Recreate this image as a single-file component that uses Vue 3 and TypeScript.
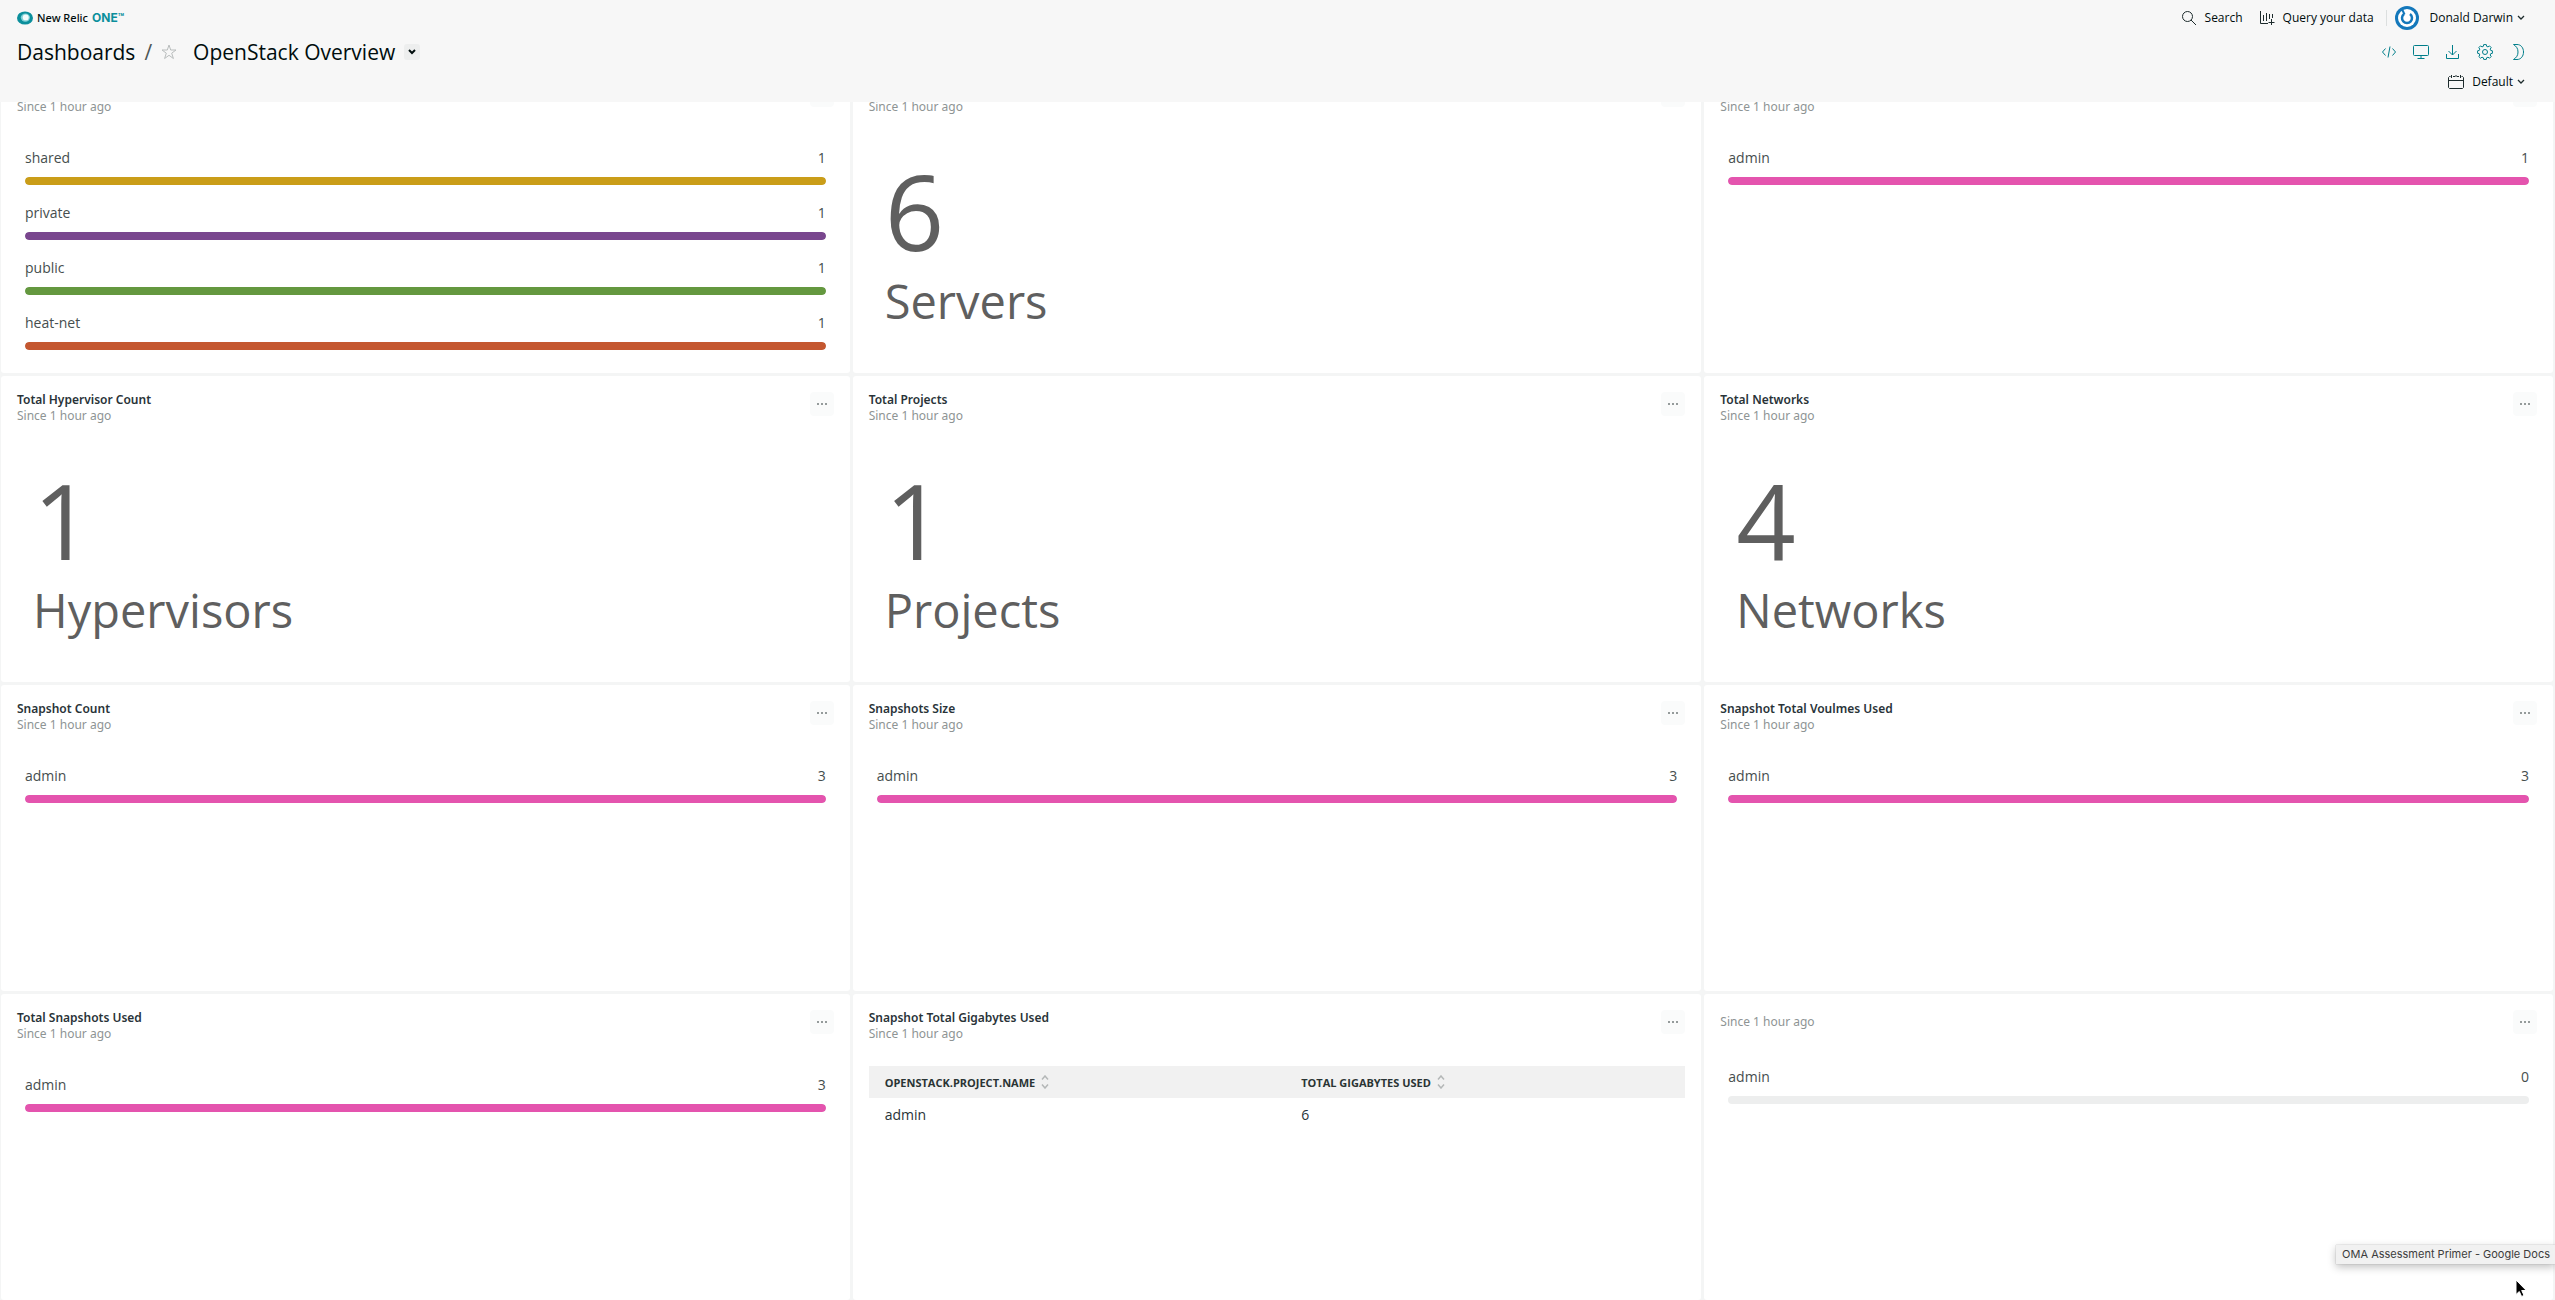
<script setup lang="ts">
import { onMounted, ref } from 'vue'

interface Bar {
  name: string
  value: number
  color: string
}

interface Widget {
  id: string
  title?: string
  bars?: Bar[]
  count?: number
  unit?: string
  table?: { project: string; used: number }[]
}

const pink = '#e454ae'

const widgets: Widget[] = [
  {
    id: 'network-names',
    title: '',
    bars: [
      { name: 'shared', value: 1, color: '#ca9d18' },
      { name: 'private', value: 1, color: '#79468e' },
      { name: 'public', value: 1, color: '#64983f' },
      { name: 'heat-net', value: 1, color: '#c45730' },
    ],
  },
  { id: 'servers', title: '', count: 6, unit: 'Servers' },
  { id: 'owners', title: '', bars: [{ name: 'admin', value: 1, color: pink }] },
  { id: 'hypervisors', title: 'Total Hypervisor Count', count: 1, unit: 'Hypervisors' },
  { id: 'projects', title: 'Total Projects', count: 1, unit: 'Projects' },
  { id: 'networks', title: 'Total Networks', count: 4, unit: 'Networks' },
  { id: 'snap-count', title: 'Snapshot Count', bars: [{ name: 'admin', value: 3, color: pink }] },
  { id: 'snap-size', title: 'Snapshots Size', bars: [{ name: 'admin', value: 3, color: pink }] },
  { id: 'snap-volumes', title: 'Snapshot Total Voulmes Used', bars: [{ name: 'admin', value: 3, color: pink }] },
  { id: 'snap-used', title: 'Total Snapshots Used', bars: [{ name: 'admin', value: 3, color: pink }] },
  { id: 'snap-gigabytes', title: 'Snapshot Total Gigabytes Used', table: [{ project: 'admin', used: 6 }] },
  { id: 'untitled', bars: [{ name: 'admin', value: 0, color: pink }] },
]

const board = ref<HTMLElement | null>(null)

// Bars are relative to the largest value in their own widget.
function share(bar: Bar, all: Bar[]): string {
  const max = Math.max(...all.map((b) => b.value))
  return max > 0 ? `${(bar.value / max) * 100}%` : '0%'
}

onMounted(() => {
  if (board.value) board.value.scrollTop = 35
})
</script>

<template>
  <div class="app">
    <header class="head">
      <div class="row row-top">
        <a class="brand" href="#">
          <svg width="16" height="14" viewBox="0 0 16 14" aria-hidden="true">
            <ellipse cx="8" cy="7" rx="8" ry="6.6" fill="#0b8f9c" />
            <ellipse cx="8.4" cy="6.6" rx="4.6" ry="4.2" fill="#7fd0d6" />
            <ellipse cx="8.7" cy="6.4" rx="3" ry="2.9" fill="#f2fbfb" />
          </svg>
          <span class="brand-name">New Relic</span>
          <span class="brand-one">ONE<span class="brand-tm">™</span></span>
        </a>
        <nav class="tools">
          <button class="tool" type="button">
            <svg width="16" height="16" viewBox="0 0 16 16" fill="none" stroke="#1d2b2c" aria-hidden="true">
              <circle cx="6.5" cy="6.5" r="5" />
              <path d="M10 10l5 5" />
            </svg>
            Search
          </button>
          <button class="tool query" type="button">
            <svg width="16" height="16" viewBox="0 0 16 16" fill="none" stroke="#1d2b2c" aria-hidden="true">
              <path d="M1.500 1v12.500H9M4.500 5v6M7.500 3v8M10.500 4v5M13.500 4v4M12.500 9v6M9.500 12.500h6" />
            </svg>
            Query your data
          </button>
          <span class="divider"></span>
          <button class="tool user" type="button">
            <svg width="24" height="24" viewBox="0 0 24 24" fill="none" aria-hidden="true">
              <circle cx="12" cy="12" r="12" fill="#1478bb" />
              <circle cx="12" cy="12" r="9" fill="#fff" />
              <path d="M9 8a5 5 0 1 0 6 0" stroke="#1478bb" stroke-width="2.500" />
              <path d="M7 3l2.500 5.500" stroke="#1478bb" stroke-width="2" />
            </svg>
            <span class="user-name">Donald Darwin</span>
            <svg class="chev" width="8" height="6" viewBox="0 0 8 6" fill="none" stroke="#1d2b2c" stroke-width="1.300" aria-hidden="true">
              <path d="M1 1l3 3 3-3" />
            </svg>
          </button>
        </nav>
      </div>

      <div class="row row-title">
        <div class="crumbs">
          <a href="#">Dashboards</a>
          <span class="slash">/</span>
          <button class="star" type="button" aria-label="Favorite">
            <svg width="16" height="16" viewBox="0 0 16 16" fill="none" stroke="#b9bdbd" aria-hidden="true">
              <path d="M8 1l1.700 5H15l-4.300 3.200 1.700 5.300L8 11.300l-4.400 3.200 1.700-5.300L1 6h5.300z" />
            </svg>
          </button>
          <h1>OpenStack Overview</h1>
          <button class="more" type="button" aria-label="Switch dashboard">
            <svg width="8" height="6" viewBox="0 0 8 6" fill="none" stroke="#000d0d" stroke-width="2" aria-hidden="true">
              <path d="M1 1l3 3 3-3" />
            </svg>
          </button>
        </div>
        <div class="actions">
          <button type="button" aria-label="Embed code">
            <svg width="16" height="16" viewBox="0 0 16 16" aria-hidden="true">
              <path d="M4.500 4.500L1.500 8l3 3.500M11.500 4.500l3 3.500-3 3.500M9 2.500l-2 11" />
            </svg>
          </button>
          <button type="button" aria-label="TV mode">
            <svg width="16" height="16" viewBox="0 0 16 16" aria-hidden="true">
              <rect x=".5" y="1.500" width="15" height="10" rx="1" />
              <path d="M8 11.500v3M4.500 14.500h7" />
            </svg>
          </button>
          <button type="button" aria-label="Download">
            <svg width="16" height="16" viewBox="0 0 16 16" aria-hidden="true">
              <path d="M7.500 1v10M3.500 7l4 4 4-4M1.500 10v4.500h12V10" />
            </svg>
          </button>
          <button type="button" aria-label="Settings">
            <svg width="16" height="16" viewBox="0 0 16 16" aria-hidden="true">
              <path d="M6.700 .6h2.600l.4 1.800 1.300.5 1.500-1 1.700 1.700-1 1.500.5 1.300 1.700.4v2.500l-1.700.4-.5 1.300 1 1.500-1.700 1.700-1.500-1-1.300.5-.4 1.700H6.700l-.4-1.700-1.300-.5-1.500 1-1.700-1.700 1-1.500-.5-1.300-1.700-.4V6.800l1.700-.4.5-1.300-1-1.500 1.700-1.700 1.500 1 1.300-.5z" />
              <circle cx="8" cy="8" r="2.500" />
            </svg>
          </button>
          <button type="button" aria-label="Dark mode">
            <svg width="16" height="16" viewBox="0 0 16 16" aria-hidden="true">
              <path d="M4.500 .5H8c4 0 6.500 3.400 6.500 7.500S12 15.500 8 15.500H4.500C7.500 13.500 9 11.500 9 8S7.500 2.500 4.500 .5z" />
            </svg>
          </button>
        </div>
      </div>

      <div class="row row-time">
        <button class="tool time" type="button">
          <svg width="16" height="16" viewBox="0 0 16 16" fill="none" stroke="#1d2b2c" aria-hidden="true">
            <path d="M2.500 2.500h-1l-1 1v10l1 1h13l1-1v-10l-1-1h-1M5 2.500h2M9 2.500h2M3.500 1v3M8 1v2M12.500 1v3M.5 6.500h15" />
          </svg>
          <span>Default</span>
          <svg class="chev" width="8" height="6" viewBox="0 0 8 6" fill="none" stroke="#1d2b2c" stroke-width="1.300" aria-hidden="true">
            <path d="M1 1l3 3 3-3" />
          </svg>
        </button>
      </div>
    </header>

    <main ref="board" class="board">
      <div class="grid">
        <section v-for="w in widgets" :key="w.id" class="card">
          <div class="card-head">
            <div class="card-text">
              <h2 v-if="w.title !== undefined">{{ w.title }}</h2>
              <p>Since 1 hour ago</p>
            </div>
            <button class="dots" type="button" aria-label="Widget menu">
              <svg width="10" height="2" viewBox="0 0 10 2" fill="#959b9b" aria-hidden="true">
                <path d="M0 0h2v2H0zM4 0h2v2H4zM8 0h2v2H8z" />
              </svg>
            </button>
          </div>

          <ul v-if="w.bars" class="bars">
            <li v-for="b in w.bars" :key="b.name">
              <div class="bar-label">
                <span>{{ b.name }}</span>
                <span>{{ b.value }}</span>
              </div>
              <div class="track">
                <div class="fill" :style="{ width: share(b, w.bars), background: b.color }"></div>
              </div>
            </li>
          </ul>

          <div v-if="w.unit" class="billboard">
            <div class="count">{{ w.count }}</div>
            <div class="unit">{{ w.unit }}</div>
          </div>

          <table v-if="w.table" class="table">
            <thead>
              <tr>
                <th v-for="h in ['OPENSTACK.PROJECT.NAME', 'TOTAL GIGABYTES USED']" :key="h" scope="col">
                  <span class="th">
                    {{ h }}
                    <svg width="8" height="14" viewBox="0 0 8 14" fill="none" stroke="#b4b7b7" stroke-width="1.500" aria-hidden="true">
                      <path d="M1 4.500l3-3.500 3 3.500M1 9.500L4 13l3-3.500" />
                    </svg>
                  </span>
                </th>
              </tr>
            </thead>
            <tbody>
              <tr v-for="r in w.table" :key="r.project">
                <td>{{ r.project }}</td>
                <td>{{ r.used }}</td>
              </tr>
            </tbody>
          </table>
        </section>
      </div>
    </main>

    <div class="tip" role="tooltip">OMA Assessment Primer - Google Docs</div>
    <svg class="pointer" width="12" height="18" viewBox="0 0 12 18" aria-hidden="true">
      <path d="M1 1v14.500l3.300-3 2.300 5 2.400-1.100-2.300-4.900h4.600z" fill="#000" stroke="#fff" />
    </svg>
  </div>
</template>

<style>
body {
  margin: 0;
  overflow: hidden;
}
</style>

<style scoped>
.app {
  position: relative;
  display: flex;
  flex-direction: column;
  height: 100vh;
  overflow: hidden;
  background: #f4f5f5;
  color: #000d0d;
  font-family: 'Open Sans', 'Noto Sans', sans-serif;
  font-size: 12px;
}

button {
  display: flex;
  align-items: center;
  justify-content: center;
  margin: 0;
  padding: 0;
  border: 0;
  background: none;
  color: inherit;
  font: inherit;
  cursor: pointer;
}

a {
  color: inherit;
  text-decoration: none;
}

h1,
h2,
p,
ul {
  margin: 0;
  padding: 0;
  list-style: none;
}

svg {
  display: block;
  flex: none;
}

.head {
  flex: none;
  padding: 0 30px 6px 17px;
  background: #f7f7f7;
}

.row {
  display: flex;
  align-items: center;
  justify-content: space-between;
}

.row-top {
  height: 36px;
}

.row-title {
  height: 32px;
}

.row-time {
  height: 28px;
  justify-content: flex-end;
}

.brand {
  display: flex;
  align-items: center;
  line-height: 16px;
}

.brand-name {
  margin: 0 4px;
  font-family: 'Noto Sans', sans-serif;
  font-size: 11px;
  font-weight: 500;
}

.brand-one {
  display: flex;
  color: #0b8f9c;
  font-family: 'Inter', sans-serif;
  font-size: 12px;
  font-weight: 700;
}

.brand-tm {
  font-size: 10px;
  line-height: 14px;
}

.tools {
  display: flex;
  align-items: center;
}

.tool {
  gap: 8px;
  line-height: 16px;
}

.query {
  margin-left: 16px;
}

.divider {
  width: 1px;
  height: 16px;
  margin: 0 8px 0 12px;
  background: #dcdfdf;
}

.user {
  gap: 0;
}

.user-name {
  margin-left: 11px;
}

.chev {
  margin-left: 4px;
}

.crumbs {
  display: flex;
  align-items: center;
  font-size: 21px;
  line-height: 28px;
}

.slash {
  margin: 0 9px;
  color: #4d5656;
}

h1 {
  margin: 0 9px 0 16px;
  font-size: 21px;
  font-weight: 400;
}

.more {
  width: 16px;
  height: 16px;
  border-radius: 3px;
  background: #edeeee;
}

.actions {
  display: flex;
  gap: 16px;
}

.actions svg {
  fill: none;
  stroke: #007e8a;
}

.time {
  gap: 0;
}

.time span {
  margin-left: 8px;
}

.board {
  flex: 1;
  min-height: 0;
  overflow-y: auto;
  scrollbar-width: none;
}

.grid {
  display: grid;
  grid-template-columns: repeat(3, minmax(0, 1fr));
  grid-auto-rows: 306px;
  gap: 3px;
  padding: 0 2px 0 1px;
}

.card {
  padding: 16px;
  border-radius: 3px;
  background: #fff;
}

.card-head {
  display: flex;
  align-items: flex-start;
  justify-content: space-between;
}

.card-text {
  display: flex;
  flex-direction: column;
  justify-content: center;
  min-height: 24px;
  font-family: 'Noto Sans', 'Open Sans', sans-serif;
  line-height: 16px;
}

h2 {
  min-height: 16px;
  color: #293338;
  font-size: 12px;
  font-weight: 600;
}

.card-text p {
  color: #8e9494;
}

.dots {
  width: 24px;
  height: 24px;
  border-radius: 4px;
  background: #fafbfb;
}

.bars {
  display: flex;
  flex-direction: column;
  gap: 17px;
  padding: 32px 8px 0;
}

.bar-label {
  display: flex;
  justify-content: space-between;
  margin-bottom: 8px;
  color: #464e4e;
  font-size: 14px;
  line-height: 22px;
}

.track {
  height: 8px;
  overflow: hidden;
  border-radius: 4px;
  background: #edeeee;
}

.fill {
  height: 100%;
  border-radius: 4px;
}

.billboard {
  padding: 44px 16px 0;
  color: #5f5f5f;
}

.count {
  font-size: 104px;
  line-height: 104px;
}

.unit {
  margin-top: 6px;
  font-size: 47px;
  line-height: 64px;
}

.table {
  width: 100%;
  margin-top: 24px;
  border-collapse: collapse;
  table-layout: fixed;
  text-align: left;
}

.table th {
  box-sizing: border-box;
  height: 32px;
  padding: 0 16px;
  background: #f1f1f1;
  color: #2a3434;
  font-size: 11px;
  font-weight: 700;
}

.table th:first-child {
  width: 51%;
}

.th {
  display: flex;
  align-items: center;
  gap: 6px;
}

.table td {
  height: 32px;
  padding: 0 16px;
  color: #293338;
  font-size: 14px;
}

.tip {
  position: absolute;
  right: 0;
  bottom: 36px;
  padding: 0 5px 0 6px;
  background: #f1f1f1;
  box-shadow: 0 0 1px #a0a0a0, 0 3px 8px rgba(0, 0, 0, 0.25);
  color: #3c3c3c;
  font-family: 'Inter', sans-serif;
  font-size: 11px;
  line-height: 19px;
}

.pointer {
  position: absolute;
  right: 28px;
  bottom: 3px;
}
</style>
